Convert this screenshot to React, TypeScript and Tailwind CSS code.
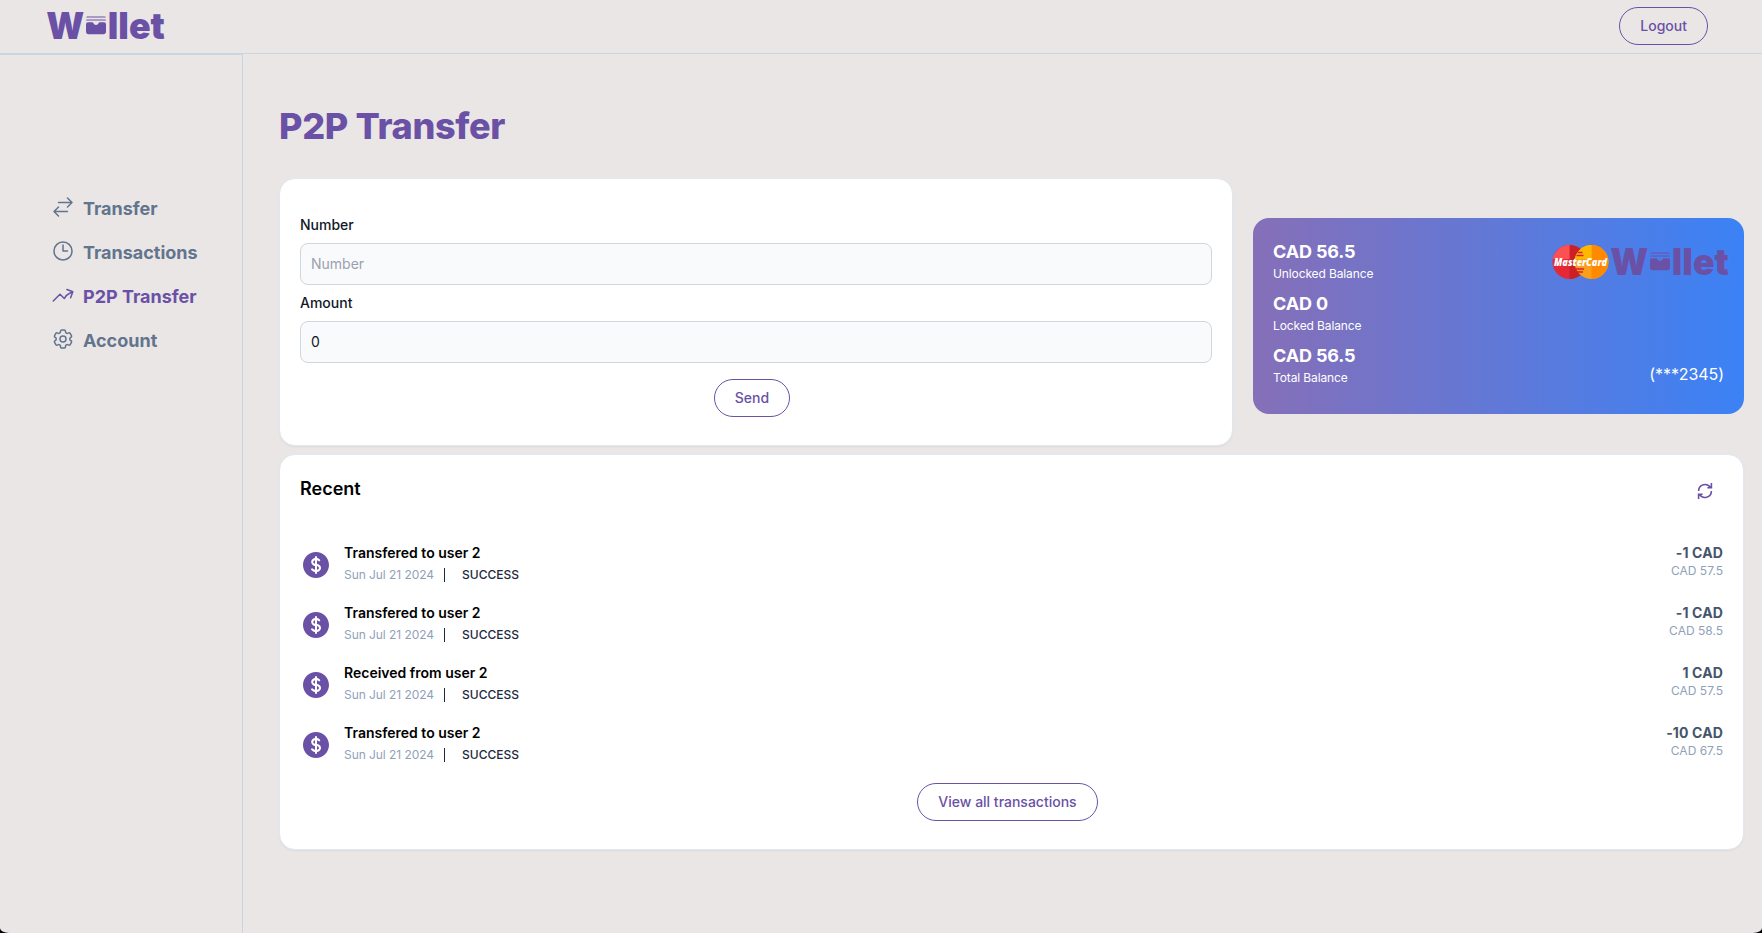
import React from "react";
import {
  HiOutlineArrowsRightLeft,
  HiOutlineClock,
  HiOutlineArrowTrendingUp,
  HiOutlineCog6Tooth,
  HiCurrencyDollar,
} from "react-icons/hi2";

const button =
  "rounded-full border border-[#6a51a6] px-5 py-2 text-sm font-medium text-[#6a51a6]";

function Logo() {
  return (
    <svg width="120" height="30" viewBox="0 0 120 30" className="shrink-0 overflow-visible" fill="#6a51a6">
      <g fontFamily="Inter, sans-serif" fontWeight="900" fontSize="37">
        <text x="0.3" y="27.5" textLength="38" lengthAdjust="spacingAndGlyphs">W</text>
        <text x="61.8" y="27.5" textLength="57" lengthAdjust="spacingAndGlyphs">llet</text>
      </g>
      <path d="M40.300 6.600a1 1 0 0 1 1-1h17.400a1 1 0 0 1 1 1Z" />
      <path d="M40 9.600a1 1 0 0 1 1-1h18a1 1 0 0 1 1 1Z" />
      <path d="M40 13.200a2 2 0 0 1 2-2h4.200c.7 0 1 .5 1.200 1a2.800 2.800 0 0 0 5.200 0c.2-.5.5-1 1.200-1H58a2 2 0 0 1 2 2v7.300a2.800 2.800 0 0 1-2.800 2.800H42.800a2.800 2.800 0 0 1-2.800-2.800Z" />
    </svg>
  );
}

function MasterCard() {
  return (
    <svg width="57" height="36" viewBox="0 0 57 36" className="shrink-0 overflow-visible">
      <circle cx="17.5" cy="18" r="17" fill="#e52836" />
      <path d="M17.5 1a17 17 0 0 1 0 34Z" fill="#cb2026" />
      <path d="M17.5 1v14H.8A17 17 0 0 1 17.5 1Z" fill="#fc5052" />
      <circle cx="39.5" cy="18" r="17" fill="#f99f1b" />
      <path d="M39.5 1a17 17 0 0 1 0 34Z" fill="#ff8900" />
      <path d="M39.5 1v14H22.8A17 17 0 0 1 39.5 1Z" fill="#ffb800" />
      <path d="M25.5 8.500h5M24.500 11.500h7M24 25h8M25 28h6" stroke="#d8222a" strokeWidth="1.4" />
      <text
        x="2"
        y="21.500"
        fill="#fff"
        fontFamily="Open Sans, sans-serif"
        fontWeight="800"
        fontStyle="italic"
        fontSize="11"
        textLength="53"
        lengthAdjust="spacingAndGlyphs"
      >
        MasterCard
      </text>
    </svg>
  );
}

function RefreshIcon() {
  return (
    <svg
      className="h-4 w-4"
      viewBox="0 0 18 20"
      fill="none"
      stroke="currentColor"
      strokeWidth="2"
    >
      <path d="M17 0v6h-5M1 20v-6h5m11-4a8 8 0 0 1-14.947 3.970M1 10a8 8 0 0 1 14.947-3.970" />
    </svg>
  );
}

const links = [
  { label: "Transfer", Icon: HiOutlineArrowsRightLeft, active: false },
  { label: "Transactions", Icon: HiOutlineClock, active: false },
  { label: "P2P Transfer", Icon: HiOutlineArrowTrendingUp, active: true },
  { label: "Account", Icon: HiOutlineCog6Tooth, active: false },
];

const balances = [
  { value: "CAD 56.5", label: "Unlocked Balance" },
  { value: "CAD 0", label: "Locked Balance" },
  { value: "CAD 56.5", label: "Total Balance" },
];

const transactions = [
  { title: "Transfered to user 2", amount: "-1 CAD", balance: "CAD 57.5" },
  { title: "Transfered to user 2", amount: "-1 CAD", balance: "CAD 58.5" },
  { title: "Received from user 2", amount: "1 CAD", balance: "CAD 57.5" },
  { title: "Transfered to user 2", amount: "-10 CAD", balance: "CAD 67.5" },
];

function Field({ label, ...input }: { label: string } & React.InputHTMLAttributes<HTMLInputElement>) {
  return (
    <label className="mb-2 block">
      <span className="mb-2 block text-sm font-medium text-gray-900">{label}</span>
      <input
        {...input}
        className="block w-full rounded-lg border border-gray-300 bg-[#f9fafc] p-2.5 text-sm text-gray-900 placeholder:text-gray-400"
      />
    </label>
  );
}

export default function App() {
  return (
    <div className="h-[933px] overflow-hidden bg-black font-['Inter',sans-serif]">
      <div className="flex h-full flex-col bg-[#eae6e5] [border-bottom-left-radius:9px_5px] [border-bottom-right-radius:9px_5px]">
        <header className="flex h-[54px] shrink-0 items-center justify-between border-b border-slate-300 pr-[54px] pb-px pl-[46px]">
          <Logo />
          <button className={button}>Logout</button>
        </header>
        <div className="flex flex-1">
          <nav className="w-[243px] shrink-0 border-t border-r border-slate-300 pt-[132px] pl-[51px]">
            {links.map(({ label, Icon, active }) => (
              <a
                key={label}
                className={`flex py-2 text-lg font-bold ${active ? "text-[#6a51a6]" : "text-slate-500"}`}
              >
                <Icon className="mr-2 h-6 w-6" />
                {label}
              </a>
            ))}
          </nav>
          <main className="flex flex-1 flex-col pr-[18px] pl-9">
            <h1 className="mt-[52px] text-4xl font-extrabold tracking-[-0.009em] text-[#6a51a6]">P2P Transfer</h1>
            <div className="mt-8 flex items-center gap-5">
              <section className="flex h-[268px] w-[954px] flex-col rounded-2xl border border-slate-200 bg-white px-5 pt-9 shadow-xs">
                <Field label="Number" placeholder="Number" />
                <Field label="Amount" defaultValue="0" />
                <div className="mt-2 mr-2 flex justify-center">
                  <button className={button}>Send</button>
                </div>
              </section>
              <section className="mt-2 flex h-[196px] flex-1 justify-between rounded-2xl bg-linear-to-r/srgb from-[#866fb8] to-[#3b82f6] p-5 text-white">
                <div className="flex flex-col gap-2">
                  {balances.map((b) => (
                    <div key={b.label}>
                      <div className="text-lg font-bold tracking-[-0.008em]">{b.value}</div>
                      <div className="text-xs tracking-[-0.01em]">{b.label}</div>
                    </div>
                  ))}
                </div>
                <div className="flex flex-col items-end justify-between pt-[6px] pb-2">
                  <div className="-mr-[6px] flex items-center gap-px">
                    <MasterCard />
                    <Logo />
                  </div>
                  <span className="text-base tracking-[-0.005em]">(***2345)</span>
                </div>
              </section>
            </div>
            <section className="mt-2 h-[396px] rounded-2xl border border-slate-200 bg-white px-5 pt-5 shadow-xs">
              <div className="flex h-7 items-start justify-between pr-[10px]">
                <h2 className="text-lg font-semibold text-black">Recent</h2>
                <span className="mt-2 text-[#6a51a6]">
                  <RefreshIcon />
                </span>
              </div>
              <ul className="mt-10">
                {transactions.map((t, i) => (
                  <li key={i} className="flex h-[60px] items-start">
                    <HiCurrencyDollar className="mt-[6px] h-8 w-8 text-[#6a51a6]" />
                    <div className="ml-3 flex-1">
                      <div className="text-sm font-semibold text-black">{t.title}</div>
                      <div className="flex h-6 items-center text-xs">
                        <span className="w-[90px] tracking-[-0.005em] whitespace-nowrap text-slate-400">Sun Jul 21 2024</span>
                        <span className="ml-[10px] h-[14px] w-px bg-slate-800" />
                        <span className="ml-[17px] font-medium text-slate-800">SUCCESS</span>
                      </div>
                    </div>
                    <div className="text-right">
                      <div className="text-sm font-bold tracking-[0.01em] text-slate-600">{t.amount}</div>
                      <div className="text-xs text-slate-400">{t.balance}</div>
                    </div>
                  </li>
                ))}
              </ul>
              <div className="flex justify-center">
                <button className={`mr-2 ${button}`}>View all transactions</button>
              </div>
            </section>
          </main>
        </div>
      </div>
    </div>
  );
}
